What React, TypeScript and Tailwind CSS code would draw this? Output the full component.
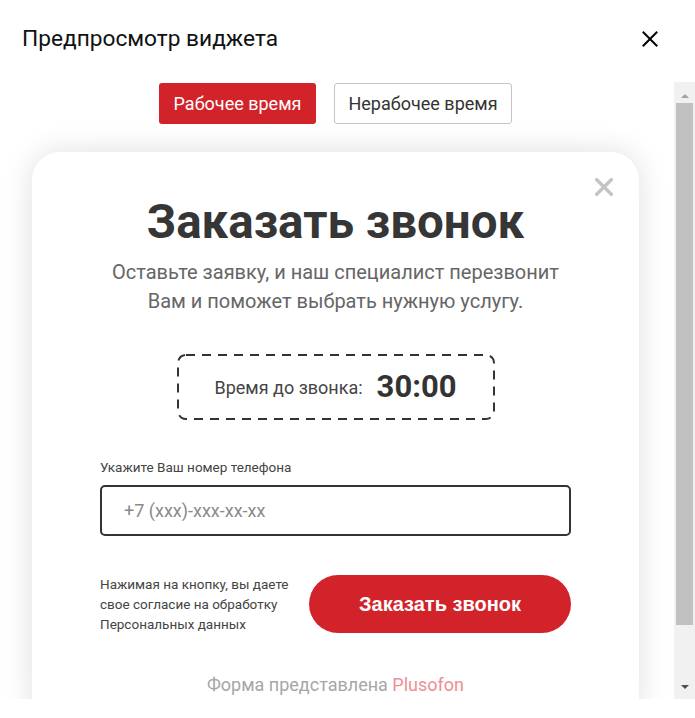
import React from 'react'

function CloseIcon({ className, strokeWidth }: { className: string; strokeWidth: number }) {
  return (
    <svg viewBox="0 0 16 16" className={className} fill="none" stroke="currentColor" strokeWidth={strokeWidth} strokeLinecap="square">
      <path d="M1.5 1.5 L14.5 14.5 M14.5 1.5 L1.5 14.5" />
    </svg>
  )
}

function Arrow({ up, color }: { up: boolean; color: string }) {
  return (
    <svg viewBox="0 0 8 4" className="h-[4px] w-[8px]" fill={color}>
      <path d={up ? 'M0 4 L4 0 L8 4 Z' : 'M0 0 L8 0 L4 4 Z'} />
    </svg>
  )
}

function DashedBox({ children }: { children: React.ReactNode }) {
  return (
    <div className="relative mx-auto mt-[38px] flex h-[66px] w-[318px] items-center justify-center gap-[14px]">
      <svg className="absolute inset-0 h-full w-full" viewBox="0 0 318 66" fill="none">
        <rect x="1" y="1" width="316" height="64" rx="8" stroke="#333" strokeWidth="2" strokeDasharray="9 7" />
      </svg>
      {children}
    </div>
  )
}

export default function App() {
  return (
    <div className="flex h-[718px] w-[695px] flex-col bg-white font-['Roboto',sans-serif]">
      <div className="flex h-[82px] shrink-0 items-center justify-between pb-[4px] pl-[22px] pr-[37px]">
        <h2 className="text-[22.7px] leading-none text-[#111]">Предпросмотр виджета</h2>
        <button className="text-black">
          <CloseIcon className="h-[16px] w-[16px]" strokeWidth={2} />
        </button>
      </div>

      <div className="flex h-[617px] shrink-0">
        <div className="w-[674px] overflow-hidden">
          <div className="pb-[36px] pt-[1px]">
            <div className="flex justify-center gap-[18px] pr-[3px]">
              <button className="h-[41px] w-[157px] rounded-[3px] bg-[#d2232a] text-[18px] text-white">
                Рабочее время
              </button>
              <button className="h-[41px] w-[178px] rounded-[3px] border border-[#c4c4c4] bg-white text-[18px] text-[#333]">
                Нерабочее время
              </button>
            </div>

            <div className="relative ml-[32px] mt-[28px] w-[607px] rounded-[28px] bg-white pb-[30px] pt-[44px] shadow-[0_0_30px_rgba(0,0,0,0.13)]">
              <button className="absolute right-[26px] top-[26px] text-[#c4c4c4]">
                <CloseIcon className="h-[18px] w-[18px]" strokeWidth={3} />
              </button>

              <h1 className="text-center text-[47.5px] font-bold leading-[52px] text-[#363636]">
                Заказать звонок
              </h1>
              <p className="mt-[10px] text-center text-[20px] leading-[29px] text-[#666]">
                Оставьте заявку, и наш специалист перезвонит
                <br />
                Вам и поможет выбрать нужную услугу.
              </p>

              <DashedBox>
                <span className="relative text-[18px] text-[#444]">Время до звонка:</span>
                <span className="relative text-[31px] font-bold text-[#333]">30:00</span>
              </DashedBox>

              <div className="mx-[68px] mt-[38px]">
                <label className="block text-[13.5px] leading-[18px] text-[#444]">Укажите Ваш номер телефона</label>
                <div className="mt-[9px] flex h-[51px] items-center rounded-[5px] border-2 border-[#333] pl-[22px] text-[18px] text-[#8a8a8a]">
                  +7 (xxx)-xxx-xx-xx
                </div>

                <div className="mt-[38px] flex items-center justify-between">
                  <p className="w-[200px] text-[13.5px] leading-[20px] text-[#444]">
                    Нажимая на кнопку, вы даете свое согласие на обработку Персональных данных
                  </p>
                  <button className="h-[58px] w-[262px] rounded-full bg-[#d2232a] font-['Liberation_Sans',sans-serif] text-[20px] font-bold text-white">
                    Заказать звонок
                  </button>
                </div>
              </div>

              <p className="mt-[39px] text-center text-[18px] leading-[24px] text-[#a6a6a6]">
                Форма представлена <span className="text-[#ee8f94]">Plusofon</span>
              </p>
            </div>
          </div>
        </div>

        <div className="flex w-[21px] flex-col bg-[#f1f1f1]">
          <div className="flex h-[21px] items-end justify-center pb-[5px]">
            <Arrow up color="#a3a3a3" />
          </div>
          <div className="mx-[2px] h-[522px] bg-[#c1c1c1]" />
          <div className="flex flex-1 items-end justify-center pb-[10px]">
            <Arrow up={false} color="#505050" />
          </div>
        </div>
      </div>
    </div>
  )
}
